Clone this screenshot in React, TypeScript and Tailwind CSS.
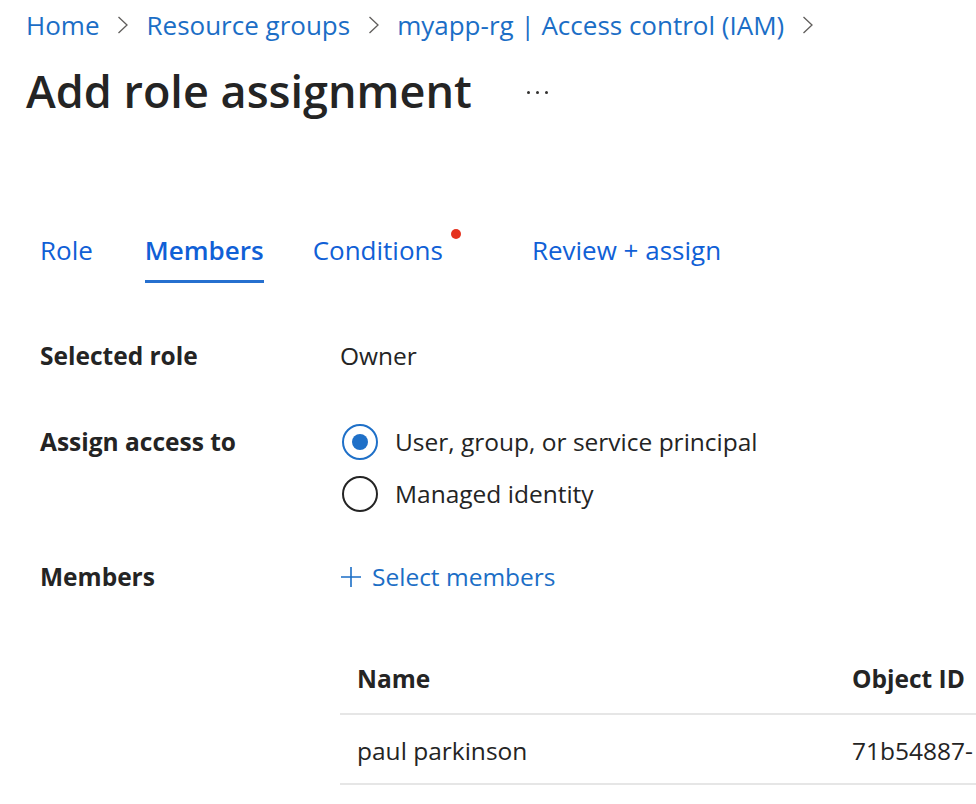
import React from "react";

const FONT = { fontFamily: '"Open Sans", "Noto Sans", Arial, sans-serif' };

function Chevron() {
  return (
    <svg width="12" height="18" viewBox="0 0 12 18" className="ml-[18px] mr-[17px] shrink-0">
      <path d="M1.5 1 L10 9 L1.5 17" fill="none" stroke="#605e5c" strokeWidth="1.3" />
    </svg>
  );
}

export default function App() {
  return (
    <div
      style={FONT}
      className="w-[976px] h-[804px] overflow-hidden bg-white text-[#242424]"
    >
      {/* Breadcrumb */}
      <div className="flex items-center pl-[26px] mt-[9px] h-[32px] text-[26px] leading-[32px] text-[#1b6ec6] whitespace-nowrap">
        <span>Home</span>
        <Chevron />
        <span>Resource groups</span>
        <Chevron />
        <span>myapp-rg | Access control (IAM)</span>
        <Chevron />
      </div>

      {/* Title */}
      <div className="flex items-center pl-[26px] mt-[22px] h-[56px]">
        <h1 className="text-[45px] leading-[56px] font-semibold text-[#242424] whitespace-nowrap">
          Add role assignment
        </h1>
        <div className="ml-[55px] flex items-center gap-[6px] mt-[2px]">
          <span className="w-[3px] h-[3px] rounded-full bg-[#323130]" />
          <span className="w-[3px] h-[3px] rounded-full bg-[#323130]" />
          <span className="w-[3px] h-[3px] rounded-full bg-[#323130]" />
        </div>
      </div>

      {/* Tabs */}
      <div className="flex items-start pl-[40px] mt-[115px] h-[49px] text-[26px] leading-[32px] text-[#1060d6] whitespace-nowrap">
        <div>Role</div>
        <div className="ml-[52px] flex flex-col items-stretch">
          <span className="font-semibold">Members</span>
          <span className="mt-[14px] h-[3px] bg-[#2670cf]" />
        </div>
        <div className="ml-[49px] relative">
          Conditions
          <span className="absolute -right-[18px] top-[-5px] w-[10px] h-[10px] rounded-full bg-[#e5321f]" />
        </div>
        <div className="ml-[89px]">Review + assign</div>
      </div>

      {/* Form */}
      <div className="pl-[40px] mt-[57px] text-[24.5px] leading-[32px]">
        <div className="flex items-center h-[32px]">
          <div className="w-[300px] font-bold">Selected role</div>
          <div>Owner</div>
        </div>

        <div className="flex items-start mt-[52px]">
          <div className="w-[300px] font-bold h-[36px] flex items-center">Assign access to</div>
          <div className="flex flex-col gap-[16px] ml-[2px]">
            <div className="flex items-center h-[36px]">
              <span className="w-[36px] h-[36px] rounded-full border-[2px] border-[#1f70c8] flex items-center justify-center">
                <span className="w-[16px] h-[16px] rounded-full bg-[#1f70c8]" />
              </span>
              <span className="ml-[17px]">User, group, or service principal</span>
            </div>
            <div className="flex items-center h-[36px]">
              <span className="w-[36px] h-[36px] rounded-full border-[2px] border-[#242424]" />
              <span className="ml-[17px]">Managed identity</span>
            </div>
          </div>
        </div>

        <div className="flex items-center mt-[49px] h-[32px]">
          <div className="w-[300px] font-bold">Members</div>
          <div className="flex items-center text-[#1b6ec6]">
            <svg width="20" height="20" viewBox="0 0 20 20" className="ml-[1px]">
              <path d="M10 0 V20 M0 10 H20" stroke="#1b6ec6" strokeWidth="1.6" fill="none" />
            </svg>
            <span className="ml-[11px]">Select members</span>
          </div>
        </div>
      </div>

      {/* Table */}
      <div className="ml-[340px] mt-[52px] text-[24.5px] leading-[32px]">
        <div className="flex items-center h-[70px] border-b-[2px] border-[#e6e6e6]">
          <div className="pl-[17px] w-[512px] font-bold">Name</div>
          <div className="font-bold whitespace-nowrap">Object ID</div>
        </div>
        <div className="flex items-center h-[70px] pt-[3px] border-b-[2px] border-[#e6e6e6]">
          <div className="pl-[17px] w-[512px]">paul parkinson</div>
          <div className="whitespace-nowrap">71b54887-</div>
        </div>
      </div>
    </div>
  );
}
